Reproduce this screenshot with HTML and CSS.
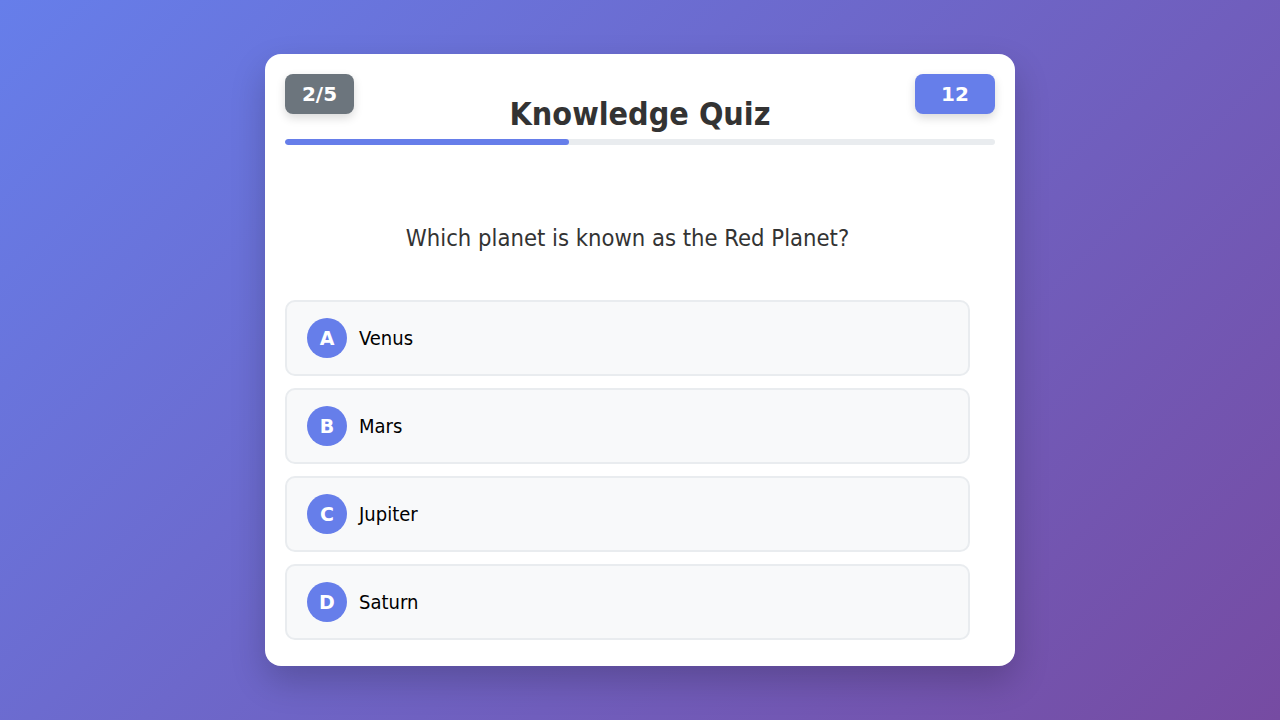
FILE: index.html
```html
<!DOCTYPE html>
<html lang="en">
<head>
<meta charset="utf-8">
<title>Knowledge Quiz</title>
<link rel="stylesheet" href="styles.css">
</head>
<body>
<main class="card">
  <div class="badge badge-count">2/5</div>
  <div class="badge badge-timer">12</div>
  <header class="header">
    <h1 class="title">Knowledge Quiz</h1>
    <div class="progress"><div class="progress-fill" style="width:40%"></div></div>
  </header>
  <section class="body">
    <p class="question">Which planet is known as the Red Planet?</p>
    <ul class="options">
      <li class="option"><span class="letter">A</span><span class="label">Venus</span></li>
      <li class="option"><span class="letter">B</span><span class="label">Mars</span></li>
      <li class="option"><span class="letter">C</span><span class="label">Jupiter</span></li>
      <li class="option"><span class="letter">D</span><span class="label">Saturn</span></li>
    </ul>
  </section>
</main>
</body>
</html>
```
FILE: styles.css
```css
* { box-sizing: border-box; }
html, body { height: 100%; }
body {
  margin: 0;
  font-family: "DejaVu Sans Condensed", "DejaVu Sans", sans-serif;
  background: linear-gradient(135deg, #667eea 0%, #764ba2 100%);
  display: flex;
  align-items: center;
  justify-content: center;
}
.card {
  position: relative;
  width: 750px;
  height: 612px;
  background: #fff;
  border-radius: 16px;
  padding: 20px 20px 26px;
  box-shadow: 0 15px 35px rgba(0,0,0,0.2);
}
.badge {
  position: absolute;
  top: 20px;
  height: 40px;
  border-radius: 8px;
  color: #fff;
  font-family: "DejaVu Sans", sans-serif;
  font-weight: bold;
  font-size: 20px;
  display: flex;
  align-items: center;
  justify-content: center;
  box-shadow: 0 4px 10px rgba(0,0,0,0.15);
}
.badge-count { left: 20px; width: 69px; background: #6c757d; }
.badge-timer { right: 20px; width: 80px; background: #667eea; }
.header { padding-top: 22px; }
.title {
  margin: 0 0 6px;
  text-align: center;
  font-size: 32px;
  line-height: 37px;
  color: #333;
}
.progress {
  height: 6px;
  background: #e9ecef;
  border-radius: 3px;
  overflow: hidden;
}
.progress-fill { height: 100%; background: #667eea; border-radius: 3px; }
.body { margin-right: 25px; }
.question {
  margin: 0;
  padding: 79px 0 48px;
  text-align: center;
  font-size: 23.6px;
  line-height: 28px;
  color: #333;
}
.options {
  list-style: none;
  margin: 0;
  padding: 0;
  display: flex;
  flex-direction: column;
  gap: 12px;
}
.option {
  display: flex;
  align-items: center;
  gap: 12px;
  height: 76px;
  padding: 0 20px;
  background: #f8f9fa;
  border: 2px solid #e9ecef;
  border-radius: 10px;
}
.letter {
  width: 40px;
  height: 40px;
  border-radius: 50%;
  background: #667eea;
  color: #fff;
  font-family: "DejaVu Sans", sans-serif;
  font-weight: bold;
  font-size: 19px;
  display: flex;
  align-items: center;
  justify-content: center;
}
.label { font-size: 20px; color: #000; }
```
